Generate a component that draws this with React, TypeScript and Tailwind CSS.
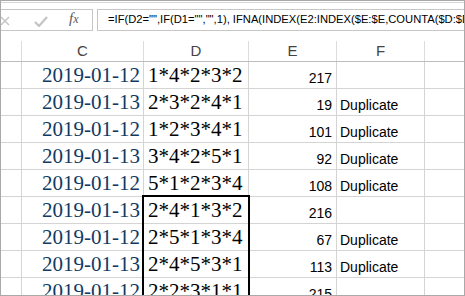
import React from "react";

const rows: [string, string, string, string][] = [
  ["2019-01-12", "1*4*2*3*2", "217", ""],
  ["2019-01-13", "2*3*2*4*1", "19", "Duplicate"],
  ["2019-01-12", "1*2*3*4*1", "101", "Duplicate"],
  ["2019-01-13", "3*4*2*5*1", "92", "Duplicate"],
  ["2019-01-12", "5*1*2*3*4", "108", "Duplicate"],
  ["2019-01-13", "2*4*1*3*2", "216", ""],
  ["2019-01-12", "2*5*1*3*4", "67", "Duplicate"],
  ["2019-01-13", "2*4*5*3*1", "113", "Duplicate"],
  ["2019-01-12", "2*2*3*1*1", "215", ""],
];

const serif = { fontFamily: '"Liberation Serif", "Times New Roman", serif' };
const sans = { fontFamily: '"Liberation Sans", Arial, sans-serif' };

export default function App() {
  return (
    <div className="w-[465px] h-[296px] overflow-hidden bg-white border border-[#a9a9a9] box-border flex flex-col">
      {/* formula bar */}
      <div className="h-[40px] shrink-0 flex flex-col">
        <div className="h-[2px] border-b border-[#d6d6d6]" />
        <div className="flex pt-[6px] h-[28px]">
          <div className="w-[92px] h-[22px] border border-l-0 border-[#c6c6c6] flex items-center relative">
            <svg width="10" height="10" viewBox="0 0 10 10" className="absolute left-[-1px] top-[6px]">
              <path d="M1 1 L9 9 M9 1 L1 9" stroke="#c4c4c4" strokeWidth="1.4" />
            </svg>
            <svg width="14" height="11" viewBox="0 0 14 11" className="absolute left-[33px] top-[6px]">
              <path d="M1 6 L5 10 L13 1" stroke="#c4c4c4" strokeWidth="2.2" fill="none" />
            </svg>
            <span
              className="absolute left-[68px] top-[1px] text-[15px] italic text-[#5a5a5a] leading-none"
              style={serif}
            >
              f<span className="text-[12px] italic">x</span>
            </span>
          </div>
          <div className="ml-[4px] flex-1 h-[22px] border border-r-0 border-[#c6c6c6] flex items-center pl-[10px] overflow-hidden whitespace-nowrap">
            <span className="text-[11.2px] text-black leading-none" style={sans}>
              =IF(D2="",IF(D1="","",1), IFNA(INDEX(E2:INDEX($E:$E,COUNTA($D:$D)),MATCH(D2,D$1:D1,0)),""))
            </span>
          </div>
        </div>
      </div>
      {/* column headers */}
      <div className="h-[21px] shrink-0 flex border-b border-[#bcbcbc] text-[15px] text-[#444]" style={sans}>
        <div className="w-[21px] border-r border-[#dcdcdc]" />
        <div className="w-[122px] border-r border-[#dcdcdc] flex items-center justify-center">C</div>
        <div className="w-[105px] border-r border-[#dcdcdc] flex items-center justify-center">D</div>
        <div className="w-[88px] border-r border-[#dcdcdc] flex items-center justify-center">E</div>
        <div className="w-[88px] border-r border-[#dcdcdc] flex items-center justify-center">F</div>
        <div className="flex-1" />
      </div>
      {/* rows */}
      <div className="flex flex-col">
        {rows.map((r, i) => {
          const boxed = i >= 5;
          return (
            <div key={i} className="h-[27px] shrink-0 flex border-b border-[#d4d4d4]">
              <div className="w-[21px] border-r border-[#d4d4d4]" />
              <div
                className="w-[122px] border-r border-[#d4d4d4] flex items-end justify-end pr-[3px] pb-[2px] text-[21px] leading-none text-[#103a64]"
                style={serif}
              >
                {r[0]}
              </div>
              <div
                className="w-[105px] border-r border-[#d4d4d4] flex items-end pl-[4px] pb-[2px] text-[21px] leading-none text-black relative overflow-visible"
                style={serif}
              >
                {boxed && (
                  <div
                    className={
                      "absolute left-[-2px] right-[-2px] bottom-[-1px] border-x-2 border-black " +
                      (i === 5 ? "top-[-2px] border-t-2" : "top-0")
                    }
                  />
                )}
                <span className="relative">{r[1]}</span>
              </div>
              <div
                className="w-[88px] border-r border-[#d4d4d4] flex items-end justify-end pr-[4px] pb-[3px] text-[14px] leading-none text-black"
                style={sans}
              >
                {r[2]}
              </div>
              <div
                className="w-[88px] border-r border-[#d4d4d4] flex items-end pl-[3px] pb-[3px] text-[14px] leading-none text-black"
                style={sans}
              >
                {r[3]}
              </div>
              <div className="flex-1" />
            </div>
          );
        })}
      </div>
    </div>
  );
}
